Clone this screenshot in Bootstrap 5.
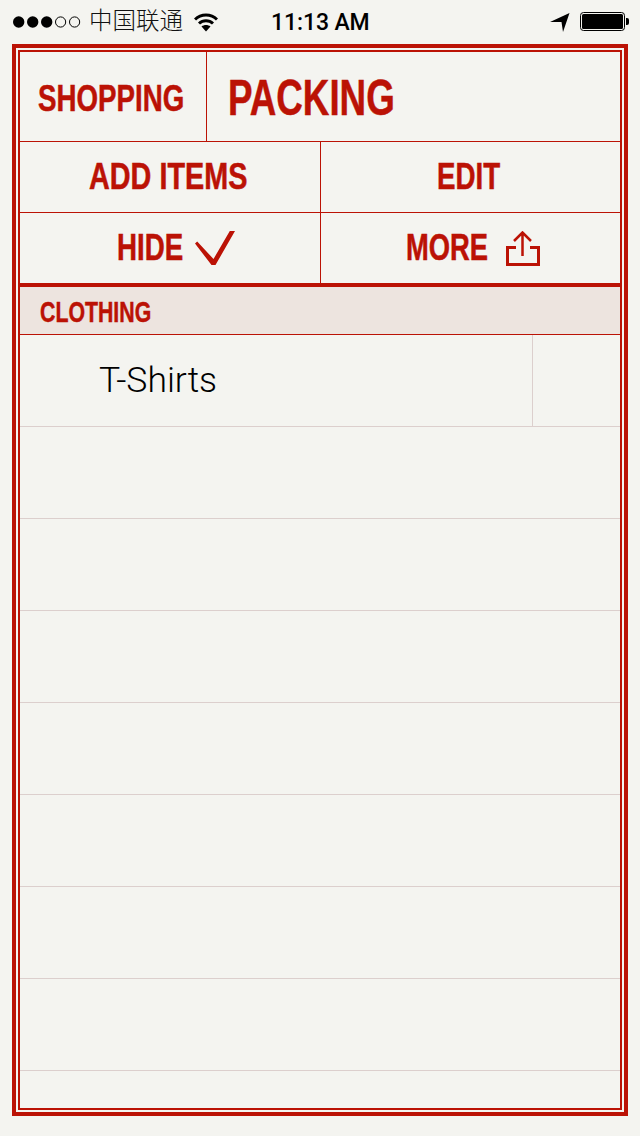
<!DOCTYPE html>
<html lang="zh">
<head>
  <meta charset="UTF-8">
  <meta name="viewport" content="width=device-width, initial-scale=1">
  <title>Packing</title>
  <link href="https://cdn.jsdelivr.net/npm/bootstrap@5.3.3/dist/css/bootstrap.min.css" rel="stylesheet">
  <style>
    body { background: #f4f4f0; width: 640px; height: 1136px; overflow: hidden; }
    .status-strip { height: 44px; color: #000; }
    .dots-svg { margin-left: 12px; }
    .carrier { font: 300 23.5px/1 "Noto Sans CJK SC", sans-serif; margin: -4px 11px 0 3px; color: #111; }
    .clock { font: 500 23px Roboto, sans-serif; letter-spacing: -.1px; width: 96px; margin-left: 53px; white-space: nowrap; }
    .arrow-svg { margin-right: 10px; }
    .batt-svg { margin-right: 11px; }
    .frame-outer { margin: 0 12px; height: 1072px; border: 4px solid #bb1205; padding: 2px; }
    .frame-inner { height: 100%; border: 2px solid #bb1205; }
    .cond { font-family: "Liberation Sans", sans-serif; font-weight: 700; color: #bb1205; line-height: 1; white-space: nowrap; -webkit-text-stroke: .5px #bb1205; }
    .squeeze { display: inline-block; transform-origin: left center; }
    .red-line { border-bottom: 1px solid #bb1205; }
    .red-left { border-left: 1px solid #bb1205; }
    .head-row { height: 90px; }
    .shop-cell { width: 186px; padding: 4px 0 0 18px; font-size: 36px; }
    .shop-cell .squeeze { transform: scaleX(.77); }
    .pack-cell { padding: 3px 0 0 21px; font-size: 50px; }
    .pack-cell .squeeze { transform: scaleX(.735); }
    .act-row { height: 71px; }
    .act-last { height: 74px; border-bottom: 4px solid #bb1205; }
    .act-cell { font-size: 36px; }
    .half-l, .half-r { width: 300px; }
    .add-text { transform: scaleX(.8); margin: 0 -38px 0 -2px; }
    .edit-text { transform: scaleX(.77); margin: 0 -16px 0 -1px; }
    .hide-cell { padding-left: 12px; }
    .hide-text { transform: scaleX(.77); margin-right: -16px; }
    .more-cell { padding-left: 5px; }
    .more-text { transform: scaleX(.76); margin-right: -24px; }
    .sect-row { height: 48px; background: #ede4df; padding: 3px 0 0 20px; font-size: 30px; }
    .sect-row .squeeze { transform: scaleX(.71); }
    .item-row { height: 92px; border-bottom: 1px solid #dccfcd; flex: none; }
    .item-name { padding: 0 0 2px 79px; font: 300 35.5px Roboto, sans-serif; color: #000; }
    .item-side { width: 88px; border-left: 1px solid #dccfcd; }
  </style>
</head>
<body class="m-0">
  <div class="status-strip d-flex align-items-center">
    <svg class="dots-svg" width="74" height="14" viewBox="0 0 74 14">
      <circle cx="6.7" cy="7" r="5.7"/><circle cx="20.7" cy="7" r="5.7"/><circle cx="34.7" cy="7" r="5.7"/>
      <circle cx="48.6" cy="7" r="5.1" fill="none" stroke="#000"/><circle cx="62.6" cy="7" r="5.1" fill="none" stroke="#000"/>
    </svg>
    <span class="carrier">中国联通</span>
    <svg width="24" height="19" viewBox="0 0 24 19">
      <path d="M1 6.5C7 .6 17 .6 23 6.5" fill="none" stroke="#000" stroke-width="3"/>
      <path d="M5 10.5C9 6.8 15 6.8 19 10.5" fill="none" stroke="#000" stroke-width="3"/>
      <path d="M7.5 13.5 12 18.5 16.5 13.5C14 11.5 10 11.5 7.5 13.5Z"/>
    </svg>
    <span class="clock">11:13 AM</span>
    <svg class="arrow-svg ms-auto" width="20" height="19" viewBox="0 0 20 19">
      <path d="M0 9 19.5 0 13 19 11.5 9Z"/>
    </svg>
    <svg class="batt-svg" width="49" height="20" viewBox="0 0 49 20">
      <rect x=".5" y=".5" width="44" height="18" rx="3" fill="none" stroke="#000"/>
      <rect x="2" y="2" width="41" height="15" rx="1.5"/>
      <path d="M46 6h1a2 2 0 0 1 2 2v3a2 2 0 0 1-2 2h-1Z"/>
    </svg>
  </div>

  <div class="frame-outer">
    <div class="frame-inner d-flex flex-column overflow-hidden">
      <div class="head-row d-flex red-line">
        <div class="shop-cell cond d-flex align-items-center"><span class="squeeze">SHOPPING</span></div>
        <div class="pack-cell cond red-left flex-grow-1 d-flex align-items-center"><span class="squeeze">PACKING</span></div>
      </div>
      <div class="act-row d-flex red-line">
        <div class="half-l act-cell cond d-flex align-items-center justify-content-center"><span class="squeeze add-text">ADD ITEMS</span></div>
        <div class="half-r act-cell cond red-left d-flex align-items-center justify-content-center"><span class="squeeze edit-text">EDIT</span></div>
      </div>
      <div class="act-last d-flex">
        <div class="half-l hide-cell act-cell cond d-flex align-items-center justify-content-center gap-2">
          <span class="squeeze hide-text">HIDE</span>
          <svg width="40" height="34" viewBox="0 0 40 34"><path d="M0 12.5 2.2 10.5 18.5 28 34.8 0H40L20.5 34H16.5Z" fill="#bb1205"/></svg>
        </div>
        <div class="half-r more-cell act-cell cond red-left d-flex align-items-center justify-content-center gap-3">
          <span class="squeeze more-text">MORE</span>
          <svg width="34" height="35" viewBox="0 0 34 35" fill="none" stroke="#bb1205">
            <path d="M10 16.5H1.5V33.5H32.5V16.5H24" stroke-width="3"/>
            <path d="M16.5 25V2M8 10 16.5 1.5 25 10" stroke-width="2.5"/>
          </svg>
        </div>
      </div>
      <div class="sect-row cond red-line d-flex align-items-center"><span class="squeeze">CLOTHING</span></div>
      <div class="item-row d-flex">
        <div class="item-name flex-grow-1 d-flex align-items-center">T-Shirts</div>
        <div class="item-side"></div>
      </div>
      <div class="item-row"></div>
      <div class="item-row"></div>
      <div class="item-row"></div>
      <div class="item-row"></div>
      <div class="item-row"></div>
      <div class="item-row"></div>
      <div class="item-row"></div>
      <div class="flex-grow-1"></div>
    </div>
  </div>
  <script src="https://cdn.jsdelivr.net/npm/bootstrap@5.3.3/dist/js/bootstrap.bundle.min.js"></script>
</body>
</html>
